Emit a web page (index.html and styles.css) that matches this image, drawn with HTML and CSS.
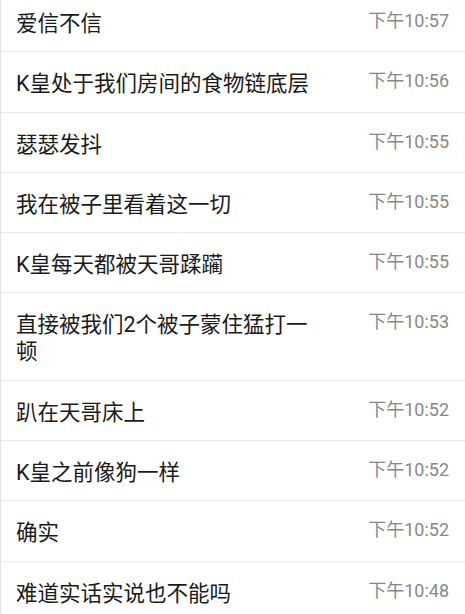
FILE: index.html
```html
<!DOCTYPE html>
<html lang="zh-CN">
<head>
<meta charset="utf-8">
<link rel="stylesheet" href="styles.css">
</head>
<body>
<ul class="list">
  <li class="row"><span class="msg">爱信不信</span><span class="time">下午10:57</span></li>
  <li class="row"><span class="msg">K皇处于我们房间的食物链底层</span><span class="time">下午10:56</span></li>
  <li class="row"><span class="msg">瑟瑟发抖</span><span class="time">下午10:55</span></li>
  <li class="row"><span class="msg">我在被子里看着这一切</span><span class="time">下午10:55</span></li>
  <li class="row"><span class="msg">K皇每天都被天哥蹂躏</span><span class="time">下午10:55</span></li>
  <li class="row"><span class="msg">直接被我们2个被子蒙住猛打一顿</span><span class="time">下午10:53</span></li>
  <li class="row"><span class="msg">趴在天哥床上</span><span class="time">下午10:52</span></li>
  <li class="row"><span class="msg">K皇之前像狗一样</span><span class="time">下午10:52</span></li>
  <li class="row"><span class="msg">确实</span><span class="time">下午10:52</span></li>
  <li class="row"><span class="msg">难道实话实说也不能吗</span><span class="time">下午10:48</span></li>
</ul>
</body>
</html>
```

FILE: styles.css
```css
html, body {
  margin: 0;
  padding: 0;
  background: #ffffff;
  overflow: hidden;
}
body {
  font-family: Roboto, "Noto Sans CJK SC", sans-serif;
  border-left: 1px solid #e2e2e2;
  height: 614px;
  box-sizing: border-box;
}
.list {
  list-style: none;
  margin: -8px 0 0 0;
  padding: 0;
}
.row {
  display: flex;
  align-items: flex-start;
  gap: 48px;
  padding: 18px 16px 14.3px 15px;
  border-bottom: 1px solid #ebebeb;
}
.msg {
  flex: 1;
  font-size: 21.5px;
  line-height: 27px;
  color: #1a1a1a;
}
.time {
  flex-shrink: 0;
  font-size: 18px;
  line-height: 22px;
  color: #888888;
}
```
